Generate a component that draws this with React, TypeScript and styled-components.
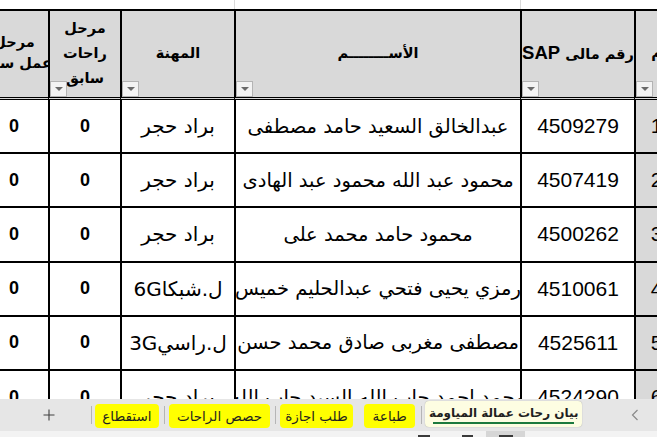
import React from "react";
import styled, { createGlobalStyle } from "styled-components";

const GlobalStyle = createGlobalStyle`
  html, body { margin: 0; padding: 0; background: #ffffff; overflow: hidden; }
  * { box-sizing: border-box; }
`;

const FONT = `"Liberation Sans", "DejaVu Sans", sans-serif`;

const Page = styled.div`
  width: 657px;
  height: 437px;
  display: flex;
  flex-direction: column;
  overflow: hidden;
  font-family: ${FONT};
  color: #000;
`;

const SheetArea = styled.div`
  height: 399px;
  overflow: hidden;
  direction: rtl;
  background: #ffffff;
`;

const COLS = "43px 114px 286px 114px 72px 70px";

const Grid = styled.div`
  display: grid;
  grid-template-columns: ${COLS};
  margin-right: -20px;
`;

const TopCell = styled.div<{ $line?: boolean }>`
  height: 9px;
  border-left: 1px solid ${(p) => (p.$line ? "#dadada" : "transparent")};
`;

const HeadCell = styled.div`
  position: relative;
  height: 91px;
  background: #d9d9d9;
  border-top: 2px solid #000;
  border-bottom: 3px double #000;
  border-left: 2px solid #000;
  display: flex;
  flex-direction: column;
  align-items: center;
  justify-content: center;
  overflow: hidden;
  font-family: "DejaVu Sans", ${FONT};
  font-weight: bold;
  font-size: 14.5px;
  white-space: nowrap;
  padding-bottom: 2px;
`;

const HeadLine = styled.span<{ $lh?: number }>`
  display: block;
  line-height: ${(p) => p.$lh ?? 25}px;
`;

const SapLatin = styled.span`
  font-family: "Liberation Sans", sans-serif;
  font-size: 18.5px;
  font-weight: bold;
`;

const FilterButton = styled.span`
  position: absolute;
  left: 0;
  bottom: 0;
  width: 17px;
  height: 16px;
  background: #f3f3f3;
  border: 1px solid #b4b4b4;
  display: flex;
  align-items: center;
  justify-content: center;
  &::after {
    content: "";
    width: 0;
    height: 0;
    border-left: 4px solid transparent;
    border-right: 4px solid transparent;
    border-top: 4px solid #6a6a6a;
  }
`;

const Cell = styled.div<{ $gray?: boolean; $bold?: boolean; $size?: number; $arabic?: boolean }>`
  height: 54.2px;
  border-left: 2px solid #000;
  border-bottom: 2px solid #000;
  background: ${(p) => (p.$gray ? "#d9d9d9" : "#ffffff")};
  display: flex;
  align-items: center;
  justify-content: center;
  overflow: hidden;
  white-space: nowrap;
  font-family: ${(p) => (p.$arabic ? `"DejaVu Sans", ${FONT}` : FONT)};
  font-weight: ${(p) => (p.$bold ? "bold" : "normal")};
  font-size: ${(p) => p.$size ?? 21}px;
`;

const CellText = styled.span`
  flex: none;
`;

const TabBar = styled.div`
  height: 32px;
  background: #e6e6e6;
  direction: rtl;
  display: flex;
  align-items: flex-start;
  font-family: "DejaVu Sans", ${FONT};
`;

const NavBox = styled.div`
  width: 75px;
  height: 32px;
  display: flex;
  align-items: center;
  padding-right: 18px;
  color: #8a8a8a;
`;

const ActiveTab = styled.div`
  position: relative;
  margin-top: 2px;
  width: 158px;
  height: 26px;
  background: #fdfde2;
  border-radius: 4px;
  box-shadow: 0 0 1px rgba(0, 0, 0, 0.35);
  display: flex;
  align-items: center;
  justify-content: center;
  font-size: 12px;
  font-weight: bold;
  color: #1f1f1f;
  white-space: nowrap;
  padding-bottom: 3px;
  &::after {
    content: "";
    position: absolute;
    left: 8px;
    right: 8px;
    bottom: 3px;
    height: 2px;
    background: #1c7a3d;
  }
`;

const Sep = styled.div<{ $before: number; $after: number }>`
  width: 1px;
  height: 18px;
  margin-top: 7px;
  margin-right: ${(p) => p.$before}px;
  margin-left: ${(p) => p.$after}px;
  background: #b5b5b5;
`;

const Tab = styled.div<{ $w: number; $gap?: number }>`
  margin-top: 5px;
  margin-left: ${(p) => p.$gap ?? 0}px;
  width: ${(p) => p.$w}px;
  height: 24px;
  background: #ffff00;
  border-radius: 4px;
  display: flex;
  align-items: center;
  justify-content: center;
  font-size: 13.5px;
  color: #1f1f1f;
  white-space: nowrap;
`;

const AddBox = styled.div`
  width: 91px;
  height: 32px;
  display: flex;
  align-items: center;
  justify-content: center;
  padding-left: 8px;
  color: #404040;
`;

const StatusBar = styled.div`
  height: 6px;
  background: #f3f3f3;
  display: flex;
  direction: ltr;
  align-items: flex-end;
`;

const StatusMark = styled.div<{ $ml: number; $w: number; $bg: string; $h: number }>`
  margin-left: ${(p) => p.$ml}px;
  width: ${(p) => p.$w}px;
  height: ${(p) => p.$h}px;
  background: ${(p) => p.$bg};
`;

const StatusBtn = styled.div`
  margin-left: 13px;
  width: 39px;
  height: 6px;
  background: #d6d6d6;
  display: flex;
  align-items: flex-end;
  justify-content: center;
`;

type Row = { n: number; sap: string; name: string; job: string; r: string; w: string };

const rows: Row[] = [
  { n: 1, sap: "4509279", name: "عبدالخالق السعيد حامد مصطفى", job: "براد حجر", r: "0", w: "0" },
  { n: 2, sap: "4507419", name: "محمود عبد الله محمود عبد الهادى", job: "براد حجر", r: "0", w: "0" },
  { n: 3, sap: "4500262", name: "محمود حامد محمد على", job: "براد حجر", r: "0", w: "0" },
  { n: 4, sap: "4510061", name: "رمزي يحيى فتحي عبدالحليم خميس", job: "ل.شبكا6G", r: "0", w: "0" },
  { n: 5, sap: "4525611", name: "مصطفى مغربى صادق محمد حسن", job: "ل.راسي3G", r: "0", w: "0" },
  { n: 6, sap: "4524290", name: "محمد احمد جاب الله السيد جاب الله", job: "براد حجر", r: "0", w: "0" },
];

const Chevron = () => (
  <svg width="8" height="12" viewBox="0 0 8 12">
    <path d="M6.5 1 L1.5 6 L6.5 11" fill="none" stroke="#8a8a8a" strokeWidth="1.2" />
  </svg>
);

const Plus = () => (
  <svg width="12" height="12" viewBox="0 0 12 12">
    <path d="M6 0.5 V11.5 M0.5 6 H11.5" stroke="#404040" strokeWidth="1.1" />
  </svg>
);

export default function App() {
  return (
    <>
      <GlobalStyle />
      <Page>
        <SheetArea>
          <Grid>
            <TopCell />
            <TopCell $line />
            <TopCell $line />
            <TopCell />
            <TopCell />
            <TopCell />

            <HeadCell>
              <HeadLine>م</HeadLine>
              <FilterButton />
            </HeadCell>
            <HeadCell>
              <HeadLine>
                رقم مالى <SapLatin>SAP</SapLatin>
              </HeadLine>
              <FilterButton />
            </HeadCell>
            <HeadCell>
              <HeadLine>الأســــــــم</HeadLine>
              <FilterButton />
            </HeadCell>
            <HeadCell>
              <HeadLine>المهنة</HeadLine>
              <FilterButton />
            </HeadCell>
            <HeadCell>
              <HeadLine>مرحل</HeadLine>
              <HeadLine>راحات</HeadLine>
              <HeadLine>سابق</HeadLine>
              <FilterButton />
            </HeadCell>
            <HeadCell>
              <HeadLine $lh={21}>مرحل</HeadLine>
              <HeadLine $lh={21}>عمل سابق</HeadLine>
              <FilterButton />
            </HeadCell>

            {rows.map((r) => (
              <React.Fragment key={r.n}>
                <Cell $gray>
                  <CellText>{r.n}</CellText>
                </Cell>
                <Cell>
                  <CellText>{r.sap}</CellText>
                </Cell>
                <Cell $arabic $size={19.5}>
                  <CellText>{r.name}</CellText>
                </Cell>
                <Cell $arabic $size={20}>
                  <CellText>{r.job}</CellText>
                </Cell>
                <Cell $bold $size={18}>
                  <CellText>{r.r}</CellText>
                </Cell>
                <Cell $bold $size={18}>
                  <CellText>{r.w}</CellText>
                </Cell>
              </React.Fragment>
            ))}
          </Grid>
        </SheetArea>

        <TabBar>
          <NavBox>
            <Chevron />
          </NavBox>
          <ActiveTab>بيان رحات عمالة المياومة</ActiveTab>
          <Sep $before={3} $after={6} />
          <Tab $w={51} $gap={11}>طباعة</Tab>
          <Tab $w={74}>طلب اجازة</Tab>
          <Sep $before={4} $after={5} />
          <Tab $w={101}>حصص الراحات</Tab>
          <Sep $before={4} $after={5} />
          <Tab $w={65}>استقطاع</Tab>
          <Sep $before={3} $after={0} />
          <AddBox>
            <Plus />
          </AddBox>
        </TabBar>

        <StatusBar>
          <StatusMark $ml={418} $w={12} $bg="#3a3a3a" $h={2} />
          <StatusMark $ml={32} $w={11} $bg="#3a3a3a" $h={2} />
          <StatusBtn>
            <StatusMark $ml={0} $w={14} $bg="#3a3a3a" $h={2} />
          </StatusBtn>
        </StatusBar>
      </Page>
    </>
  );
}
